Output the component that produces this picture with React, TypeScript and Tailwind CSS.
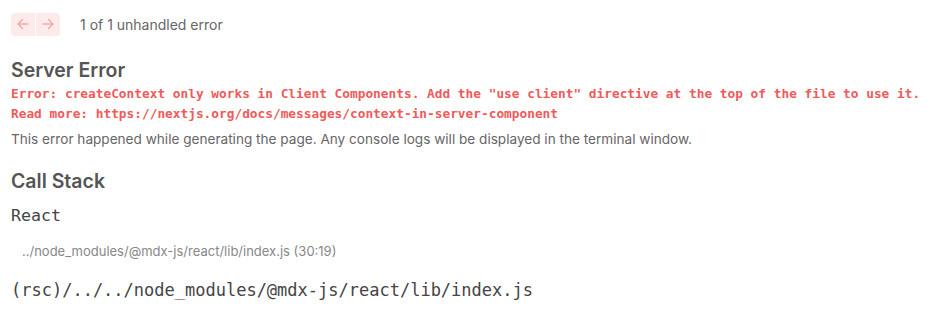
export default function App() {
  const mono = "font-['DejaVu_Sans_Mono','Liberation_Mono',monospace]";
  const sans = "font-['Inter','Liberation_Sans',sans-serif]";

  return (
    <div className={`w-[935px] h-[312px] bg-white ${sans} overflow-hidden`}>
      <div className="px-[11px] pt-[12px]">
        {/* pagination */}
        <div className="flex items-center h-[24px]">
          <div className="flex">
            <button className="w-[24px] h-[23px] flex items-center justify-center bg-[#fdeaea] rounded-l-[4px]">
              <svg width="14" height="14" viewBox="0 0 14 14" fill="none" stroke="#f4a9a9" strokeWidth="1.4" strokeLinecap="round" strokeLinejoin="round">
                <path d="M12 7H2.5M6.5 2.5L2 7l4.5 4.5" />
              </svg>
            </button>
            <button className="w-[24px] h-[23px] ml-px flex items-center justify-center bg-[#fdeaea] rounded-r-[4px]">
              <svg width="14" height="14" viewBox="0 0 14 14" fill="none" stroke="#f4a9a9" strokeWidth="1.4" strokeLinecap="round" strokeLinejoin="round">
                <path d="M2 7h9.5M7.5 2.5L12 7l-4.5 4.5" />
              </svg>
            </button>
          </div>
          <span className="ml-[20px] text-[14px] text-[#666]">1 of 1 unhandled error</span>
        </div>

        <h1 className="mt-[22px] text-[19.5px] leading-[24px] font-semibold text-[#555]">Server Error</h1>
        <div className={`mt-[2px] ${mono} text-[12.8px] leading-[20px] font-bold text-[#ef5a5a] whitespace-pre`}>
          <div>Error: createContext only works in Client Components. Add the "use client" directive at the top of the file to use it.</div>
          <div>Read more: https://nextjs.org/docs/messages/context-in-server-component</div>
        </div>
        <p className="mt-[5px] text-[13.6px] leading-[20px] text-[#666]">
          This error happened while generating the page. Any console logs will be displayed in the terminal window.
        </p>

        <h2 className="mt-[20px] text-[19.5px] leading-[24px] font-semibold text-[#555]">Call Stack</h2>
        <div className={`mt-[11px] ${mono} text-[16.6px] leading-[24px] text-[#444]`}>React</div>
        <div className="mt-[13px] pl-[11px] text-[13px] leading-[20px] text-[#888]">
          ../node_modules/@mdx-js/react/lib/index.js (30:19)
        </div>
        <div className={`mt-[17px] ${mono} text-[17px] leading-[24px] text-[#444]`}>
          (rsc)/../../node_modules/@mdx-js/react/lib/index.js
        </div>
      </div>
    </div>
  );
}
